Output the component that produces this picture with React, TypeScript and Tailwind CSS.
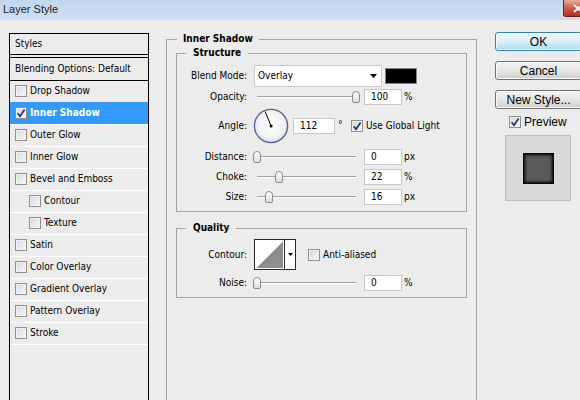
import React from "react";

function CheckBox({ checked = false }: { checked?: boolean }) {
  return (
    <span className="flex h-[12px] w-[12px] shrink-0 items-center justify-center border border-[#8f8f8f] bg-gradient-to-br from-[#d6d6d6] to-[#fafafa] shadow-[inset_0_0_0_1px_#f2f2f2]">
      {checked && (
        <svg width="10" height="10" viewBox="0 0 10 10">
          <path d="M1.6 5.2 L4 8.2 L8.6 1.4" fill="none" stroke="#24387f" strokeWidth="1.8" />
        </svg>
      )}
    </span>
  );
}

function Slider({ left, className = "" }: { left: number; className?: string }) {
  return (
    <div className={`relative h-[16px] w-[107px] shrink-0 ${className}`}>
      <div className="absolute left-[4px] right-[4px] top-[7px] h-[2px] border-t border-[#a0a0a0] bg-white" />
      <div
        className="absolute top-[2px] h-[12px] w-[8px] rounded-t-[4px] rounded-b-[2px] border border-[#8a8a8a] bg-gradient-to-b from-white to-[#dcdcdc]"
        style={{ left }}
      />
    </div>
  );
}

function NumberBox({ value, className }: { value: string; className: string }) {
  return (
    <div className={`flex h-[16px] shrink-0 items-center border border-[#c6c6c6] bg-white pl-[6px] leading-none ${className}`}>
      {value}
    </div>
  );
}

function Label({ children }: { children: React.ReactNode }) {
  return <span className="w-[70px] shrink-0 text-right">{children}</span>;
}

function AngleDial() {
  const a = (112 * Math.PI) / 180;
  const x2 = 18 + Math.cos(a) * 15.5;
  const y2 = 18 - Math.sin(a) * 15.5;
  return (
    <svg width="36" height="36" viewBox="0 0 36 36" className="ml-[6px] shrink-0">
      <defs>
        <radialGradient id="dialFill" cx="50%" cy="45%" r="55%">
          <stop offset="0%" stopColor="#ffffff" />
          <stop offset="75%" stopColor="#f2f2f2" />
          <stop offset="100%" stopColor="#d6d6d6" />
        </radialGradient>
      </defs>
      <circle cx="18" cy="18" r="16.6" fill="url(#dialFill)" stroke="#56658f" strokeWidth="1.4" />
      <line x1="18" y1="18" x2={x2} y2={y2} stroke="#000" strokeWidth="1" />
      <rect x="16.8" y="16.8" width="2.6" height="2.6" fill="#000" />
    </svg>
  );
}

function Button({ children, primary = false, className = "" }: { children: React.ReactNode; primary?: boolean; className?: string }) {
  const look = primary
    ? "border-[#3c7fb1] bg-gradient-to-b from-[#eaf6fd] via-[#d9f0fc] to-[#a9daf5] shadow-[inset_0_0_0_1px_#f4fbff]"
    : "border-[#707070] bg-gradient-to-b from-[#f3f3f3] via-[#e6e6e6] to-[#cfcfcf] shadow-[inset_0_0_0_1px_#fbfbfb]";
  return (
    <div className={`flex h-[19px] w-[87px] items-center justify-center rounded-[3px] border text-[12px] leading-none text-black ${look} ${className}`}>
      {children}
    </div>
  );
}

const effects = [
  { label: "Drop Shadow" },
  { label: "Inner Shadow", checked: true, active: true },
  { label: "Outer Glow" },
  { label: "Inner Glow" },
  { label: "Bevel and Emboss" },
  { label: "Contour", sub: true },
  { label: "Texture", sub: true },
  { label: "Satin" },
  { label: "Color Overlay" },
  { label: "Gradient Overlay" },
  { label: "Pattern Overlay" },
  { label: "Stroke" },
];

function StylesList() {
  return (
    <div className="mt-[13px] h-[380px] w-[140px] shrink-0 border border-black">
      <div className="flex h-[21px] items-center border-b border-black pl-[5px]">Styles</div>
      <div className="mt-[2px] flex h-[24px] items-center border-y border-black pl-[5px]">Blending Options: Default</div>
      {effects.map((e, i) => {
        const first = i === 0;
        const last = i === effects.length - 1;
        const rowBase = first ? "h-[21px]" : "h-[22px] border-t";
        const tone = e.active ? "bg-[#3399ff] border-[#3399ff] font-bold text-white" : "border-white text-black";
        const indent = e.sub ? "pl-[19px]" : "pl-[5px]";
        return (
          <div key={e.label} className={last ? "border-b border-white" : ""}>
            <div className={`flex items-center gap-[3px] pb-[1px] ${rowBase} ${tone} ${indent}`}>
              <CheckBox checked={e.checked} />
              <span>{e.label}</span>
            </div>
          </div>
        );
      })}
    </div>
  );
}

function EffectOptions() {
  return (
    <fieldset className="ml-[17px] mt-[12px] h-[390px] w-[311px] min-w-0 shrink-0 border border-[#a3a3a3] px-[9px]">
      <legend className="ml-[1px] px-[6px] font-bold leading-[14px]">Inner Shadow</legend>

      <fieldset className="min-w-0 border border-[#a3a3a3] pb-[6px]">
        <legend className="ml-[9px] px-[7px] font-bold leading-[14px]">Structure</legend>

        <div className="mt-[5px] flex h-[22px] items-center">
          <Label>Blend Mode:</Label>
          <div className="ml-[7px] flex h-[22px] w-[128px] shrink-0 items-center justify-between border border-[#c9c9c9] bg-white pl-[3px] pr-[4px]">
            <span>Overlay</span>
            <svg width="7" height="4" viewBox="0 0 7 4">
              <polygon points="0,0 7,0 3.5,4" fill="#000" />
            </svg>
          </div>
          <div className="ml-[3px] h-[16px] w-[32px] shrink-0 border border-[#858585] bg-black" />
        </div>

        <div className="mt-[2px] flex h-[16px] items-center">
          <Label>Opacity:</Label>
          <Slider left={99} className="ml-[6px]" />
          <NumberBox value="100" className="ml-[4px] w-[38px]" />
          <span className="ml-[2px]">%</span>
        </div>

        <div className="mt-[3px] flex h-[36px] items-center">
          <Label>Angle:</Label>
          <AngleDial />
          <NumberBox value="112" className="ml-[4px] w-[42px]" />
          <span className="ml-[3px] w-[13px] shrink-0 self-start pt-[11px]">°</span>
          <CheckBox checked />
          <span className="ml-[3px]">Use Global Light</span>
        </div>

        <div className="mt-[5px] flex h-[16px] items-center">
          <Label>Distance:</Label>
          <Slider left={0} className="ml-[6px]" />
          <NumberBox value="0" className="ml-[4px] w-[38px]" />
          <span className="ml-[2px]">px</span>
        </div>

        <div className="mt-[4px] flex h-[16px] items-center">
          <Label>Choke:</Label>
          <Slider left={22} className="ml-[6px]" />
          <NumberBox value="22" className="ml-[4px] w-[38px]" />
          <span className="ml-[2px]">%</span>
        </div>

        <div className="mt-[4px] flex h-[16px] items-center">
          <Label>Size:</Label>
          <Slider left={12} className="ml-[6px]" />
          <NumberBox value="16" className="ml-[4px] w-[38px]" />
          <span className="ml-[2px]">px</span>
        </div>
      </fieldset>

      <fieldset className="mt-[9px] min-w-0 border border-[#a3a3a3] pb-[6px]">
        <legend className="ml-[9px] px-[7px] font-bold leading-[14px]">Quality</legend>

        <div className="mt-[4px] flex h-[31px] items-center">
          <Label>Contour:</Label>
          <div className="ml-[7px] flex h-[31px] w-[42px] shrink-0 border border-[#2a2a2a] bg-white">
            <svg width="29" height="29" viewBox="0 0 29 29" className="shrink-0">
              <polygon points="1.5,28 28,1.5 28,28" fill="#8e8e8e" />
            </svg>
            <div className="flex w-[11px] items-center justify-center border-l border-[#2a2a2a]">
              <svg width="5" height="3" viewBox="0 0 5 3">
                <polygon points="0,0 5,0 2.5,3" fill="#000" />
              </svg>
            </div>
          </div>
          <span className="ml-[12px]">
            <CheckBox />
          </span>
          <span className="ml-[3px]">Anti-aliased</span>
        </div>

        <div className="mt-[5px] flex h-[16px] items-center">
          <Label>Noise:</Label>
          <Slider left={0} className="ml-[6px]" />
          <NumberBox value="0" className="ml-[4px] w-[38px]" />
          <span className="ml-[2px]">%</span>
        </div>
      </fieldset>
    </fieldset>
  );
}

function Actions() {
  return (
    <div className="ml-[18px] mt-[12px] flex w-[87px] shrink-0 flex-col font-['Liberation_Sans',sans-serif]">
      <Button primary>OK</Button>
      <Button className="mt-[10px]">Cancel</Button>
      <Button className="mt-[10px]">New Style...</Button>
      <div className="ml-[14px] mt-[6px] flex h-[14px] items-center gap-[3px] text-[12px]">
        <CheckBox checked />
        <span>Preview</span>
      </div>
      <div className="ml-[10px] mt-[6px] flex h-[66px] w-[66px] items-center justify-center border border-[#bdbdbd] bg-[#dadada]">
        <div className="h-[31px] w-[31px] bg-[#5a5a5a] shadow-[inset_0_0_3px_2px_#000]" />
      </div>
    </div>
  );
}

export default function App() {
  return (
    <div className="h-[400px] w-[580px] overflow-hidden bg-[#ececec] font-['DejaVu_Sans_Condensed','DejaVu_Sans',sans-serif] text-[10px] leading-[12px] text-black">
      <div className="flex h-[20px] items-start bg-gradient-to-b from-[#c3d6ed] to-[#cfdff2] pl-[3px]">
        <span className="mt-[3px] font-['Liberation_Sans',sans-serif] text-[11px] leading-[13px] text-[#1c1c1c]">Layer Style</span>
        <div className="ml-auto mr-[-13px] flex h-[17px] w-[30px] items-center justify-center rounded-b-[3px] border border-t-0 border-[#6b241c] bg-gradient-to-b from-[#e8a99b] via-[#cf5c48] to-[#b52f1d]">
          <svg width="10" height="9" viewBox="0 0 10 9">
            <path d="M1 1 L9 8 M9 1 L1 8" stroke="#fff" strokeWidth="2" />
          </svg>
        </div>
      </div>
      <div className="flex items-start pl-[9px]">
        <StylesList />
        <EffectOptions />
        <Actions />
      </div>
    </div>
  );
}
